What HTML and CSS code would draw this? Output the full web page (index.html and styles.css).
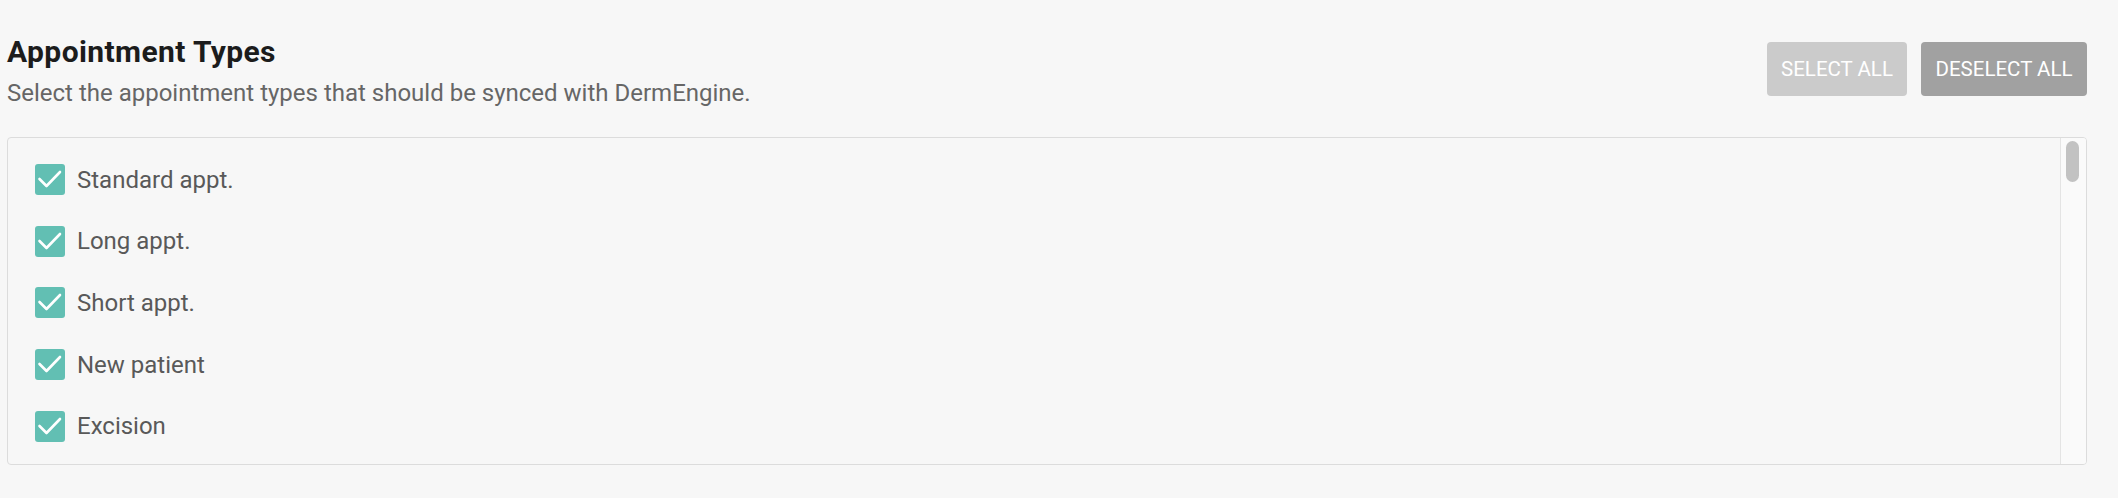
FILE: index.html
```html
<!DOCTYPE html>
<html lang="en">

<head>
    <meta charset="UTF-8">
    <meta name="viewport" content="width=device-width, initial-scale=1.0">
    <title>Appointment Types</title>

    <link rel="stylesheet" href="styles.css">
</head>

<body>
    <div class="panel">
        <div class="encabezado">
            <div>
                <h2 class="titulo">Appointment Types</h2>
                <p class="subtitulo">Select the appointment types that should be synced with DermEngine.</p>
            </div>
            <div class="botones">
                <button class="btn-select" onclick="marcarTodos(true)">SELECT ALL</button>
                <button class="btn-deselect" onclick="marcarTodos(false)">DESELECT ALL</button>
            </div>
        </div>

        <div class="lista">
            <div class="lista-items" id="listaTipos"></div>
            <div class="barra">
                <div class="barra-thumb"></div>
            </div>
        </div>
    </div>

    <script>
        tipos = ["Standard appt.", "Long appt.", "Short appt.", "New patient", "Excision"];

        const check = '<svg width="30" height="31" viewBox="0 0 30 31"><polyline points="4.5,15 11.5,22 25,8" fill="none" stroke="#fff" stroke-width="2.6" stroke-linecap="round" stroke-linejoin="round"/></svg>';

        function actualizarLista() {
            const lista = document.getElementById("listaTipos");
            lista.innerHTML = "";

            tipos.forEach((tipo, index) => {
                const item = document.createElement("label");
                item.className = "item";
                item.innerHTML = `<span class="caja" data-index="${index}">${check}</span><span>${tipo}</span>`;
                item.onclick = () => item.classList.toggle("off");
                lista.appendChild(item);
            });
        }

        function marcarTodos(valor) {
            document.querySelectorAll(".item").forEach(item => {
                item.classList.toggle("off", !valor);
            });
        }

        actualizarLista();
    </script>
</body>

</html>
```

FILE: styles.css
```css
    body {
        background-color: #f7f7f7;
        font-family: Roboto, "Liberation Sans", Arial, sans-serif;
        padding: 0;
        margin: 0;
    }

    .panel {
        padding: 34px 31px 0 7px;
    }

    .encabezado {
        display: flex;
        justify-content: space-between;
        align-items: flex-start;
    }

    .titulo {
        margin: 0;
        font-size: 30px;
        line-height: 36px;
        font-weight: 700;
        color: #1c1c1c;
        letter-spacing: 0.4px;
    }

    .subtitulo {
        margin: 9px 0 0;
        font-size: 24px;
        line-height: 28px;
        color: #666;
    }

    .botones {
        display: flex;
        gap: 14px;
        margin-top: 8px;
    }

    button {
        height: 54px;
        padding: 0;
        border: none;
        border-radius: 4px;
        color: #fff;
        font-family: inherit;
        font-size: 20.5px;
        cursor: pointer;
    }

    .btn-select {
        width: 140px;
        background-color: #cbcbcb;
    }

    .btn-deselect {
        width: 166px;
        background-color: #a1a1a1;
    }

    .lista {
        display: flex;
        margin-top: 30px;
        height: 328px;
        box-sizing: border-box;
        border: 1px solid #dcdcdc;
        border-radius: 4px;
        overflow: hidden;
    }

    .lista-items {
        flex: 1;
        display: flex;
        flex-direction: column;
        gap: 30.7px;
        padding: 26px 0 0 27px;
    }

    .barra {
        width: 26px;
        box-sizing: border-box;
        border-left: 1px solid #e4e4e4;
        background-color: #fafafa;
    }

    .barra-thumb {
        width: 13px;
        height: 41px;
        margin: 3px 0 0 5px;
        border-radius: 7px;
        background-color: #c2c2c2;
    }

    .item {
        display: flex;
        align-items: center;
        gap: 12px;
        font-size: 24px;
        color: #595959;
        cursor: pointer;
    }

    .caja {
        width: 30px;
        height: 31px;
        border-radius: 3px;
        background-color: #62bfb3;
        display: flex;
    }

    .item.off .caja {
        background-color: #fff;
        box-shadow: inset 0 0 0 2px #bbb;
    }

    .item.off svg {
        display: none;
    }
```
